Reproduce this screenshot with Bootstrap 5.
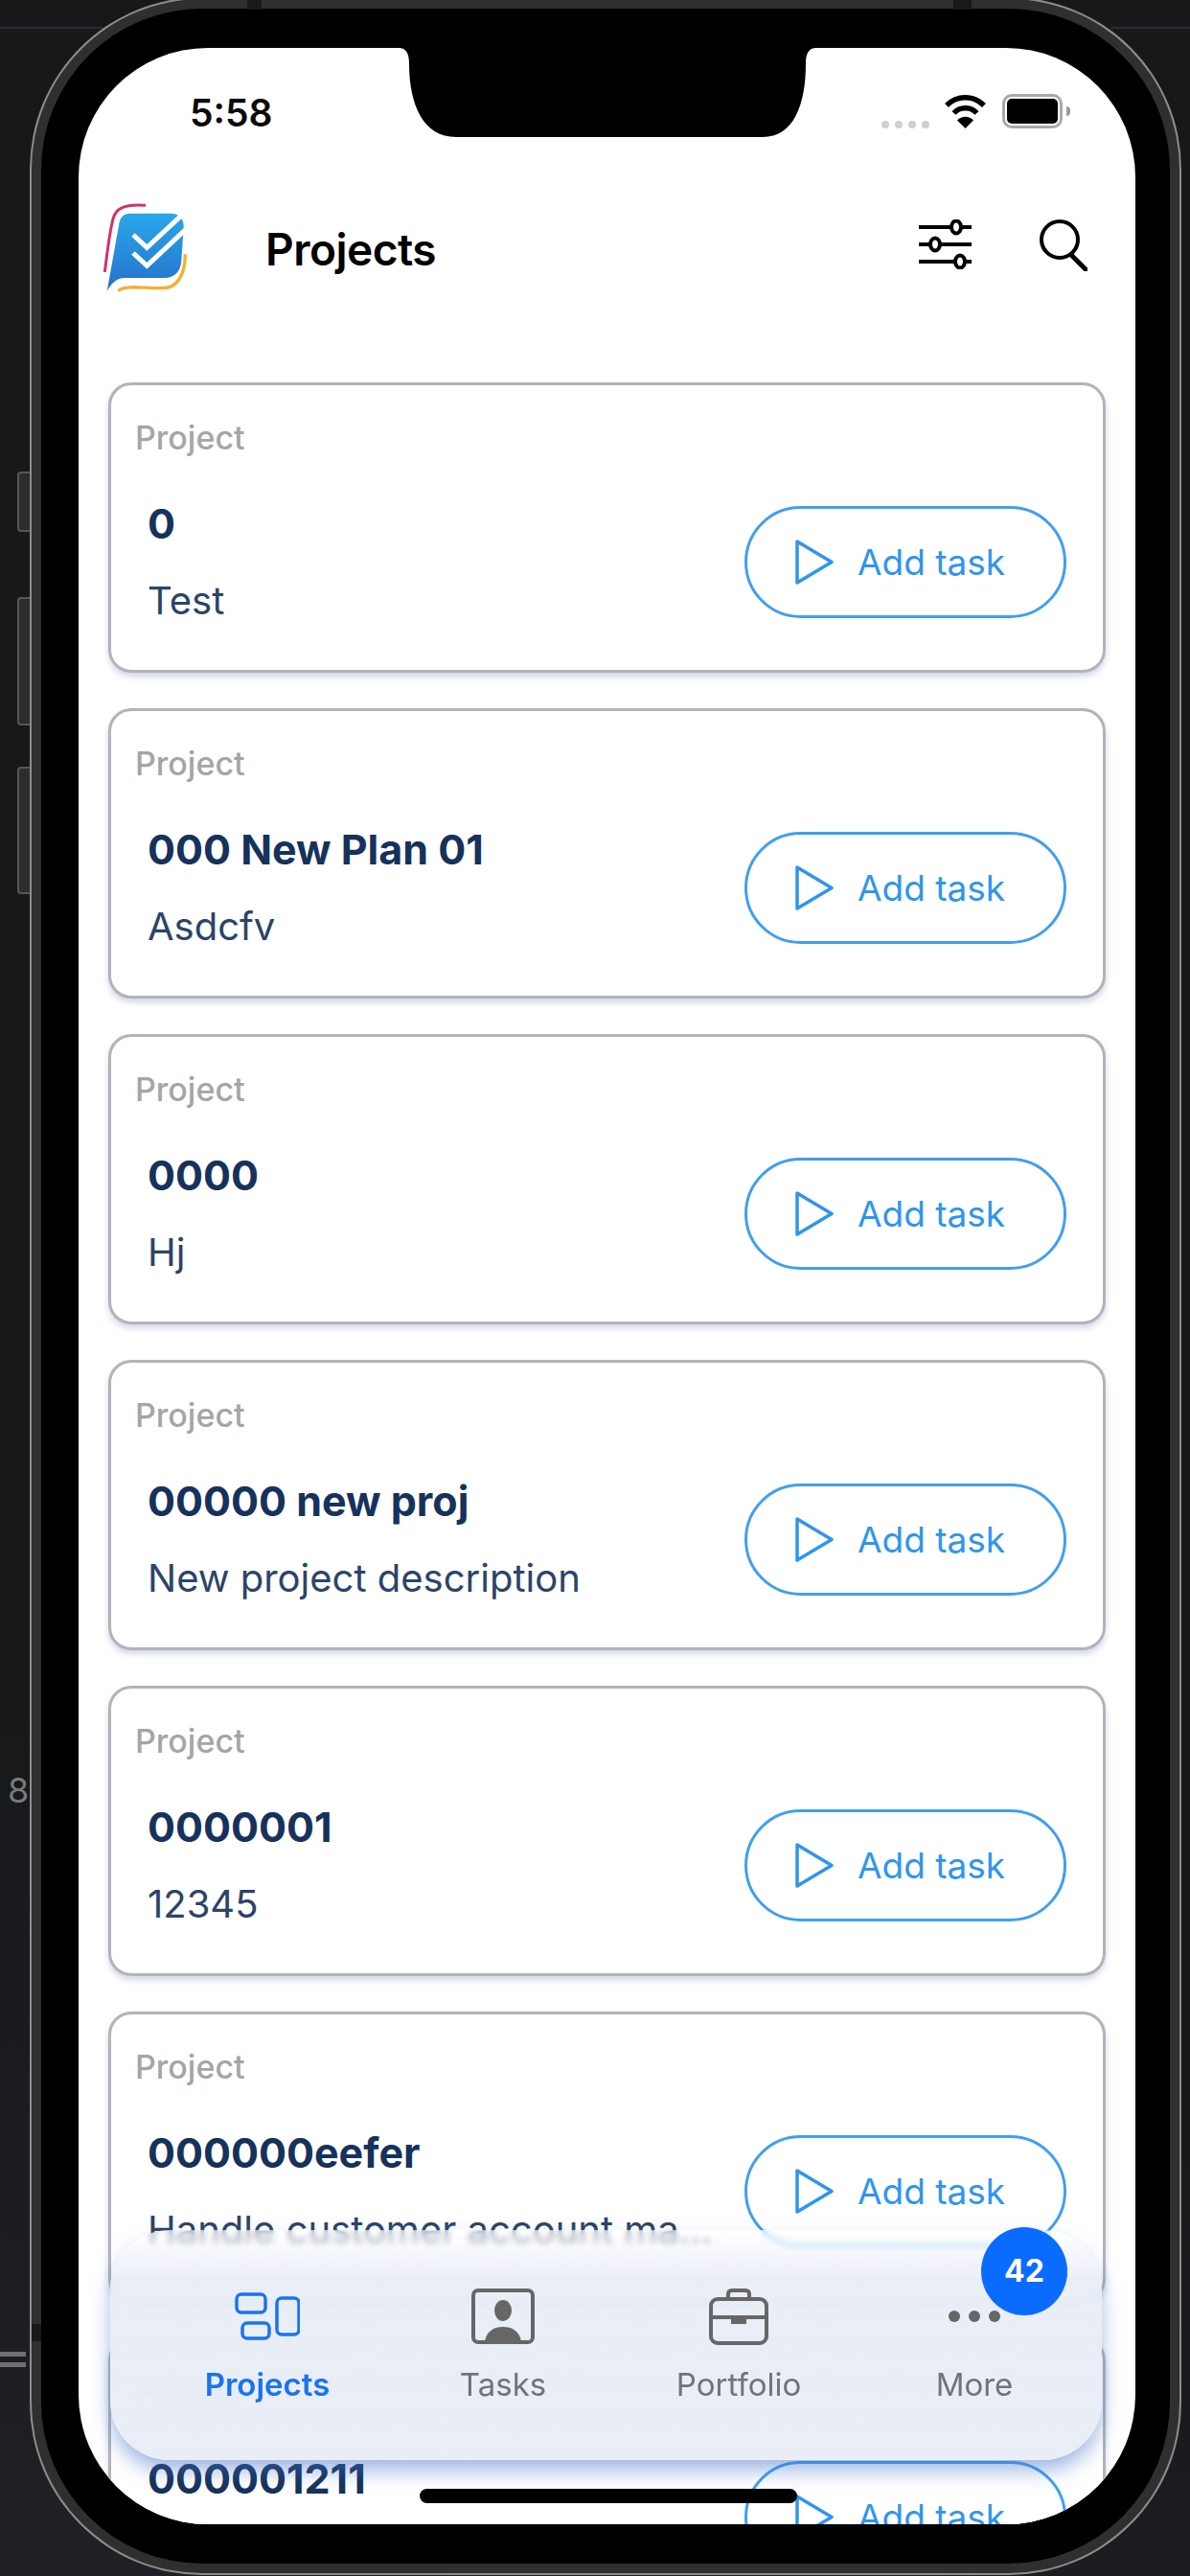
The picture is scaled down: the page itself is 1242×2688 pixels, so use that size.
<!DOCTYPE html>
<html lang="en">
<head>
  <meta charset="UTF-8">
  <meta name="viewport" content="width=device-width, initial-scale=1.0">
  <title>Projects</title>
  <link href="https://cdn.jsdelivr.net/npm/bootstrap@5.3.0/dist/css/bootstrap.min.css" rel="stylesheet">
  <style>
    html, body { height: 2688px; overflow: hidden; }
    body { background: linear-gradient(200deg, #17181a 70%, #1f2126 100%); font-family: Inter, "Liberation Sans", sans-serif; }
    .desk-line { position: absolute; background: #2a2c31; height: 2px; top: 28px; }
    .desk-mark { position: absolute; left: 8px; top: 1846px; color: #77797d; font-size: 36px; line-height: 44px; }
    .desk-eq { position: absolute; left: 0; width: 27px; height: 5px; background: #6e7074; }
    .phone-frame { position: relative; width: 1202px; height: 2690px; margin: -3px 0 0 31px; background: #000; border-radius: 180px; box-shadow: inset 0 0 0 2px #8c8c8c, inset 0 0 0 12px #2f2f2f; padding: 53px 0 0 51px; }
    .side-key { position: absolute; left: -13px; width: 13px; background: #2c2c2c; border: 2px solid #565656; border-right: 0; border-radius: 4px 0 0 4px; }
    .antenna { position: absolute; background: #191919; }
    .phone-screen { position: relative; width: 1103px; height: 2584px; background: #fff; border-radius: 135px; overflow: hidden; }
    .notch-shape { position: absolute; left: 334px; top: 0; }
    .status-row { height: 140px; padding: 48px 68px 0 116px; }
    .status-time { font-size: 39px; line-height: 40px; font-weight: 600; color: #0a0a0a; }
    .signal-dot { width: 8px; height: 8px; border-radius: 50%; background: #cfcfcf; margin-top: 28px; margin-right: 6px; }
    .batt-box { width: 63px; height: 36px; border: 3px solid #a9a9a9; border-radius: 10px; padding: 2px; margin-left: 17px; }
    .batt-fill { height: 100%; background: #000; border-radius: 5px; }
    .batt-nub { width: 4px; height: 10px; background: #9a9a9a; border-radius: 0 4px 4px 0; margin: 13px 0 0 4px; }
    .head-row { height: 130px; padding: 0 50px 0 8px; }
    .head-title { font-size: 46px; font-weight: 600; color: #000; margin: 10px 0 0 57px; letter-spacing: -.5px; }
    .proj-list { margin-top: 79px; padding: 0 31px 0 31px; display: flex; flex-direction: column; gap: 37px; }
    .proj-card { height: 303px; flex: none; border: 3px solid #b3b3b8; border-radius: 24px; box-shadow: 0 4px 6px rgba(120, 140, 190, .35); padding: 30px 38px 0 25px; background: #fff; }
    .proj-label { font-size: 34px; line-height: 50px; font-weight: 500; color: #a5a5a5; }
    .proj-row { margin-top: 34px; padding-left: 13px; }
    .proj-text { width: 590px; }
    .proj-name { font-size: 43px; line-height: 60px; font-weight: 700; color: #16325c; }
    .proj-desc { font-size: 40px; line-height: 60px; margin-top: 21px; color: #2c4468; }
    .add-btn { width: 336px; height: 117px; border: 3px solid #3f9ff2; border-radius: 59px; background: #fff; color: #2f95ee; font-size: 37px; font-weight: 400; padding: 0 0 0 50px; gap: 25px; }
    .add-btn:hover { background: #fff; color: #2f95ee; border-color: #3f9ff2; }
    .tab-bar { position: absolute; left: 33px; top: 2277px; width: 1035px; height: 240px; border-radius: 62px; background: linear-gradient(180deg, rgba(255,255,255,.55) 0, rgba(232,237,246,.93) 22%, rgba(232,237,246,.95) 100%); -webkit-backdrop-filter: blur(3px); backdrop-filter: blur(3px); box-shadow: 0 12px 22px -2px rgba(70, 115, 200, .55); padding: 60px 10px 0 41px; }
    .tab-item { width: 246px; color: #737373; }
    .tab-icon { height: 60px; }
    .tab-label { font-size: 33px; line-height: 50px; margin-top: 16px; }
    .tab-item.is-active { color: #1a73f0; }
    .tab-item.is-active .tab-label { font-weight: 600; }
    .count-badge { position: absolute; left: 909px; top: -3px; width: 90px; height: 92px; border-radius: 50%; background: #0a6cff; color: #fff; font-size: 32px; font-weight: 700; }
    .home-bar { position: absolute; left: 356px; top: 2547px; width: 394px; height: 15px; border-radius: 8px; background: #000; }
  </style>
</head>
<body>
  <!-- fondo del escritorio -->
  <div class="desk-line" style="left:0;width:190px"></div>
  <div class="desk-line" style="left:1160px;width:82px"></div>
  <div class="desk-mark">8</div>
  <div class="desk-eq" style="top:2454px"></div>
  <div class="desk-eq" style="top:2465px"></div>

  <svg width="0" height="0" class="position-absolute">
    <symbol id="play-icon" viewBox="0 0 40 47"><path d="M2 2 38 23.5 2 45Z" transform="matrix(1 0 0 1 0 0)" fill="none" stroke="#2f95ee" stroke-width="3.5" stroke-linejoin="round"/></symbol>
  </svg>

  <div class="phone-frame">
    <div class="side-key" style="top:495px;height:63px"></div>
    <div class="side-key" style="top:626px;height:134px"></div>
    <div class="side-key" style="top:803px;height:133px"></div>
    <div class="antenna" style="left:227px;top:3px;width:15px;height:10px"></div>
    <div class="antenna" style="left:964px;top:3px;width:19px;height:10px"></div>
    <div class="antenna" style="left:2px;top:2428px;width:10px;height:18px"></div>

    <div class="phone-screen">
      <svg class="notch-shape" width="436" height="93" viewBox="0 0 436 93"><path d="M0 0H436C428 0 425 6 425 16 425 60 412 93 380 93H60C26 93 11 60 11 16 11 6 8 0 0 0Z" fill="#000"/></svg>

      <div class="status-row d-flex justify-content-between">
        <div class="status-time">5:58</div>
        <div class="d-flex align-items-start">
          <div class="signal-dot"></div><div class="signal-dot"></div><div class="signal-dot"></div><div class="signal-dot me-3"></div>
          <svg width="43" height="36" viewBox="0 0 43 36"><path d="M2 12C13 1 30 1 41 12" fill="none" stroke="#000" stroke-width="5.5"/><path d="M9.5 20C16 13 27 13 33.5 20" fill="none" stroke="#000" stroke-width="5.5"/><path d="M13 27.5 21.5 36 30 27.5C25 22.5 18 22.5 13 27.5Z"/></svg>
          <div class="batt-box"><div class="batt-fill"></div></div>
          <div class="batt-nub"></div>
        </div>
      </div>

      <div class="head-row d-flex align-items-center">
        <svg width="130" height="130" viewBox="0 0 390 390">
          <defs><linearGradient id="logo-blue" x1="0" y1="0" x2="0" y2="1"><stop offset="0" stop-color="#2aa8ec"/><stop offset="1" stop-color="#2370c9"/></linearGradient></defs>
          <path d="M58 282C66 220 72 160 84 115 92 84 115 68 186 73" fill="none" stroke="#d0336f" stroke-width="9"/>
          <path d="M100 340C125 322 170 332 240 332 285 332 310 290 310 226" fill="none" stroke="#f5b02e" stroke-width="10"/>
          <path d="M138 98H265C292 98 306 116 305 140L298 245C296 280 276 300 245 300H120C96 300 80 315 65 342L103 130C106 110 118 98 138 98Z" fill="url(#logo-blue)"/>
          <path d="M147 165 190 205 322 82M147 222 190 262 322 138" fill="none" stroke="#fff" stroke-width="15"/>
        </svg>
        <div class="head-title">Projects</div>
        <div class="ms-auto d-flex align-items-center" style="gap:71px">
          <svg width="55" height="52" viewBox="0 0 55 52"><g stroke="#000" stroke-width="4" fill="#fff"><path d="M0 8H55M0 26H55M0 44H55"/><ellipse cx="39" cy="8" rx="5" ry="6.5"/><ellipse cx="17" cy="26" rx="5" ry="6.5"/><ellipse cx="43" cy="44" rx="5" ry="6.5"/></g></svg>
          <svg width="50" height="56" viewBox="0 0 50 56"><circle cx="21" cy="23" r="19" fill="none" stroke="#000" stroke-width="4"/><path d="M33 39 48 54" stroke="#000" stroke-width="5" stroke-linecap="round"/></svg>
        </div>
      </div>

      <div class="proj-list">
        <div class="card proj-card">
          <div class="proj-label">Project</div>
          <div class="proj-row d-flex align-items-center justify-content-between">
            <div class="proj-text"><div class="proj-name text-truncate">0</div><div class="proj-desc text-truncate">Test</div></div>
            <button type="button" class="btn add-btn d-flex align-items-center"><svg width="40" height="47"><use href="#play-icon"/></svg>Add task</button>
          </div>
        </div>
        <div class="card proj-card">
          <div class="proj-label">Project</div>
          <div class="proj-row d-flex align-items-center justify-content-between">
            <div class="proj-text"><div class="proj-name text-truncate">000 New Plan 01</div><div class="proj-desc text-truncate">Asdcfv</div></div>
            <button type="button" class="btn add-btn d-flex align-items-center"><svg width="40" height="47"><use href="#play-icon"/></svg>Add task</button>
          </div>
        </div>
        <div class="card proj-card">
          <div class="proj-label">Project</div>
          <div class="proj-row d-flex align-items-center justify-content-between">
            <div class="proj-text"><div class="proj-name text-truncate">0000</div><div class="proj-desc text-truncate">Hj</div></div>
            <button type="button" class="btn add-btn d-flex align-items-center"><svg width="40" height="47"><use href="#play-icon"/></svg>Add task</button>
          </div>
        </div>
        <div class="card proj-card">
          <div class="proj-label">Project</div>
          <div class="proj-row d-flex align-items-center justify-content-between">
            <div class="proj-text"><div class="proj-name text-truncate">00000 new proj</div><div class="proj-desc text-truncate">New project description</div></div>
            <button type="button" class="btn add-btn d-flex align-items-center"><svg width="40" height="47"><use href="#play-icon"/></svg>Add task</button>
          </div>
        </div>
        <div class="card proj-card">
          <div class="proj-label">Project</div>
          <div class="proj-row d-flex align-items-center justify-content-between">
            <div class="proj-text"><div class="proj-name text-truncate">0000001</div><div class="proj-desc text-truncate">12345</div></div>
            <button type="button" class="btn add-btn d-flex align-items-center"><svg width="40" height="47"><use href="#play-icon"/></svg>Add task</button>
          </div>
        </div>
        <div class="card proj-card">
          <div class="proj-label">Project</div>
          <div class="proj-row d-flex align-items-center justify-content-between">
            <div class="proj-text"><div class="proj-name text-truncate">000000eefer</div><div class="proj-desc text-truncate">Handle customer account management</div></div>
            <button type="button" class="btn add-btn d-flex align-items-center"><svg width="40" height="47"><use href="#play-icon"/></svg>Add task</button>
          </div>
        </div>
        <div class="card proj-card">
          <div class="proj-label">Project</div>
          <div class="proj-row d-flex align-items-center justify-content-between">
            <div class="proj-text"><div class="proj-name text-truncate">000001211</div><div class="proj-desc text-truncate">Plan</div></div>
            <button type="button" class="btn add-btn d-flex align-items-center"><svg width="40" height="47"><use href="#play-icon"/></svg>Add task</button>
          </div>
        </div>
      </div>

      <!-- barra inferior flotante -->
      <nav class="tab-bar d-flex">
        <div class="tab-item is-active d-flex flex-column align-items-center">
          <div class="tab-icon d-flex align-items-center"><svg width="68" height="50" viewBox="0 0 68 50" fill="none" stroke="#1a73f0" stroke-width="3.5"><rect x="2" y="2" width="30" height="19" rx="5"/><rect x="8" y="32" width="28" height="16" rx="5"/><rect x="44" y="6" width="23" height="38" rx="5"/></svg></div>
          <div class="tab-label">Projects</div>
        </div>
        <div class="tab-item d-flex flex-column align-items-center">
          <div class="tab-icon d-flex align-items-center"><svg width="66" height="58" viewBox="0 0 66 58"><rect x="2" y="2" width="62" height="54" rx="5" fill="none" stroke="#666" stroke-width="4"/><ellipse cx="33" cy="23" rx="9" ry="11" fill="#666"/><path d="M14 55C16 44 24 40 33 40S50 44 52 55Z" fill="#666"/></svg></div>
          <div class="tab-label">Tasks</div>
        </div>
        <div class="tab-item d-flex flex-column align-items-center">
          <div class="tab-icon d-flex align-items-center"><svg width="62" height="59" viewBox="0 0 62 59" fill="none" stroke="#666" stroke-width="4"><path d="M20 11V6C20 3 22 2 24 2H38C40 2 42 3 42 6V11"/><rect x="2" y="11" width="58" height="46" rx="7"/><path d="M2 30H60"/><rect x="23" y="30" width="16" height="7" fill="#666" stroke="none"/></svg></div>
          <div class="tab-label">Portfolio</div>
        </div>
        <div class="tab-item d-flex flex-column align-items-center">
          <div class="tab-icon d-flex align-items-center"><svg width="56" height="14" viewBox="0 0 56 14" fill="#666"><circle cx="7" cy="7" r="6"/><circle cx="28" cy="7" r="6"/><circle cx="49" cy="7" r="6"/></svg></div>
          <div class="tab-label">More</div>
        </div>
        <span class="count-badge d-flex align-items-center justify-content-center">42</span>
      </nav>

      <div class="home-bar"></div>
    </div>
  </div>
  <script src="https://cdn.jsdelivr.net/npm/bootstrap@5.3.0/dist/js/bootstrap.bundle.min.js"></script>
</body>
</html>
